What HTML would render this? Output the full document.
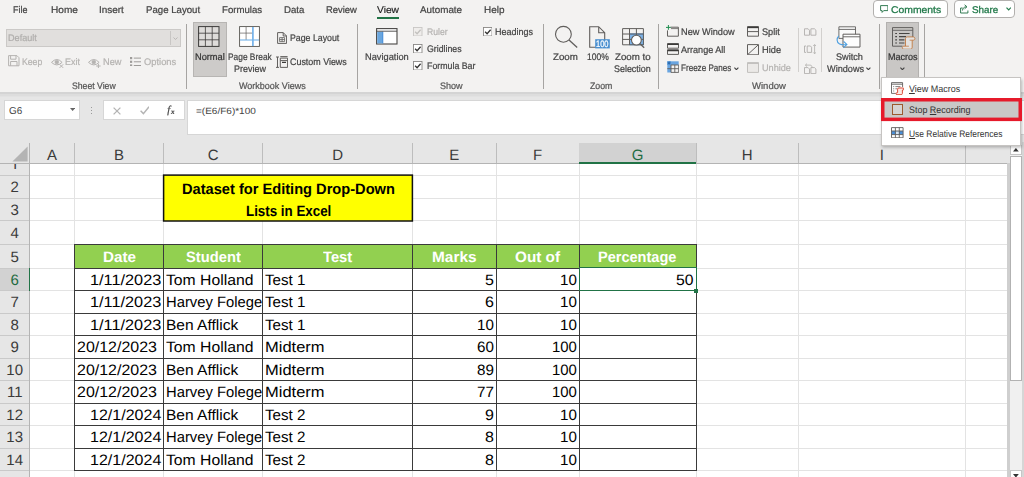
<!DOCTYPE html><html><head><meta charset="utf-8"><title>Excel</title><style>
html,body{margin:0;padding:0;}
body{width:1024px;height:477px;overflow:hidden;position:relative;background:#e6e6e6;font-family:"Liberation Sans", sans-serif;}
.a{position:absolute;box-sizing:border-box;}
.t{position:absolute;white-space:nowrap;line-height:1;transform-origin:0 50%;text-rendering:geometricPrecision;}
u{text-decoration-thickness:0.8px;text-underline-offset:1px;}
</style></head><body>
<div class="a" style="left:0.00px;top:0.00px;width:1024.00px;height:92.00px;background:#f3f2f1;"></div>
<div class="a" style="left:0.00px;top:92.00px;width:1024.00px;height:2.00px;background:#d4d4d4;"></div>
<div class="a" style="left:0.00px;top:94.00px;width:1024.00px;height:2.00px;background:#dddddd;"></div>
<div class="a" style="left:0.00px;top:96.00px;width:1024.00px;height:1.00px;background:#e2e2e2;"></div>
<div class="a" style="left:377.30px;top:17.00px;width:21.60px;height:2.00px;background:#217346;"></div>
<div class="a" style="left:873.40px;top:0.00px;width:74.40px;height:18.00px;background:#fff;border:1px solid #b2b0ae;border-radius:4px;"></div>
<div class="a" style="left:954.40px;top:0.00px;width:60.40px;height:18.00px;background:#fff;border:1px solid #b2b0ae;border-radius:4px;"></div>
<svg class="a" style="left:879.50px;top:5.00px;" width="8.50" height="8.50" viewBox="0 0 8.5 8.5"><path d="M0.6 0.6h7.3v5h-4.2l-1.6 1.8v-1.8h-1.5z" fill="none" stroke="#1e6e42" stroke-width="0.9"/></svg>
<svg class="a" style="left:960.00px;top:4.30px;" width="8.50" height="9.50" viewBox="0 0 8.5 9.5"><path d="M2.6 4h-2v5h7.3v-2.5" fill="none" stroke="#1e6e42" stroke-width="0.9"/><path d="M2.5 6.5c0.2-2.4 1.6-3.6 3.6-3.7M4.6 0.8l2.4 2-2.4 2" fill="none" stroke="#1e6e42" stroke-width="0.9"/></svg>
<svg class="a" style="left:1005.80px;top:7.40px;" width="5.40" height="3.80" viewBox="0 0 5.4 3.8"><path d="M0.5 0.6l2.2 2.3 2.2-2.3" fill="none" stroke="#237a4b" stroke-width="1.2"/></svg>
<div class="a" style="left:186.05px;top:23.50px;width:1.10px;height:65.50px;background:#a6a4a2;"></div>
<div class="a" style="left:356.85px;top:23.50px;width:1.10px;height:65.50px;background:#a6a4a2;"></div>
<div class="a" style="left:542.95px;top:23.50px;width:1.10px;height:65.50px;background:#a6a4a2;"></div>
<div class="a" style="left:658.05px;top:23.50px;width:1.10px;height:65.50px;background:#a6a4a2;"></div>
<div class="a" style="left:878.95px;top:23.50px;width:1.10px;height:65.50px;background:#a6a4a2;"></div>
<div class="a" style="left:923.95px;top:23.50px;width:1.10px;height:65.50px;background:#a6a4a2;"></div>
<div class="a" style="left:797.90px;top:28.00px;width:1.00px;height:44.00px;background:#d2d0ce;"></div>
<div class="a" style="left:821.30px;top:28.00px;width:1.00px;height:44.00px;background:#d2d0ce;"></div>
<div class="a" style="left:6.00px;top:29.10px;width:175.00px;height:17.60px;background:#e1dfdd;border:1px solid #cbc9c7;"></div>
<div class="a" style="left:169.80px;top:30.50px;width:1.00px;height:14.70px;background:#c8c6c4;"></div>
<svg class="a" style="left:173.30px;top:36.50px;" width="5.00" height="3.40" viewBox="0 0 5 3.4"><path d="M0.5 0.5l2 2 2-2" fill="none" stroke="#b5b3b1" stroke-width="0.9"/></svg>
<svg class="a" style="left:8.00px;top:55.40px;" width="11.60" height="11.40" viewBox="0 0 11.6 11.4"><path d="M0.6 0.6h8.3l2.1 2.1v8.1h-10.4z M2.6 0.6v3.6h5.4v-3.6 M2.6 10.8v-4.3h6.4v4.3" fill="none" stroke="#b5b3b1" stroke-width="1"/></svg>
<svg class="a" style="left:50.80px;top:57.60px;" width="13.00" height="10.50" viewBox="0 0 13 10.5"><path d="M0.5 4.4Q5.8 -1.4 11.1 4.4Q5.8 9.4 0.5 4.4z" fill="none" stroke="#b5b3b1" stroke-width="1"/><circle cx="5.8" cy="4.1" r="1.9" fill="#b5b3b1" stroke="#b5b3b1" stroke-width="0.6"/><path d="M8.6 6.3l3.6 3.6M12.2 6.3l-3.6 3.6" stroke="#b5b3b1" stroke-width="1"/></svg>
<svg class="a" style="left:88.20px;top:57.60px;" width="13.00" height="10.50" viewBox="0 0 13 10.5"><path d="M0.5 4.4Q5.8 -1.4 11.1 4.4Q5.8 9.4 0.5 4.4z" fill="none" stroke="#b5b3b1" stroke-width="1"/><circle cx="5.8" cy="4.1" r="1.9" fill="#b5b3b1" stroke="#b5b3b1" stroke-width="0.6"/><path d="M10.4 5.8v4.4M8.2 8h4.4" stroke="#b5b3b1" stroke-width="1"/></svg>
<svg class="a" style="left:129.50px;top:56.80px;" width="11.80" height="9.60" viewBox="0 0 11.8 9.6"><g fill="#9d9b99"><rect x="0" y="0" width="2.2" height="2.2"/><rect x="0" y="3.7" width="2.2" height="2.2"/><rect x="0" y="7.4" width="2.2" height="2.2"/><rect x="3.8" y="0.6" width="8" height="1"/><rect x="3.8" y="4.3" width="8" height="1"/><rect x="3.8" y="8" width="8" height="1"/></g></svg>
<div class="a" style="left:192.50px;top:22.30px;width:34.00px;height:54.40px;background:#cdcbc9;border:1px solid #b7b5b3;"></div>
<svg class="a" style="left:198.30px;top:25.90px;" width="21.60" height="21.00" viewBox="0 0 21.6 21"><rect x="0.6" y="0.6" width="20.4" height="19.8" fill="#dedcda" stroke="#3b3a39" stroke-width="1"/><path d="M7.4 0.6v19.8M14.2 0.6v19.8M0.6 7.2h20.4M0.6 13.8h20.4" stroke="#3b3a39" stroke-width="0.8"/></svg>
<svg class="a" style="left:239.20px;top:25.90px;" width="21.00" height="21.00" viewBox="0 0 21 21"><rect x="0.6" y="0.6" width="19.8" height="19.8" fill="#fff" stroke="#55534f" stroke-width="0.9"/><path d="M7.1 1v13M1 7.1h12.9" stroke="#605e5c" stroke-width="0.7"/><path d="M13.9 1v19" stroke="#74b2ea" stroke-width="1.7"/><path d="M1 14h19" stroke="#74b2ea" stroke-width="1.1"/></svg>
<svg class="a" style="left:277.00px;top:31.50px;" width="10.20" height="12.00" viewBox="0 0 10.2 12"><path d="M0.6 0.6h5.6l3.4 3.4v7.4h-9z M6.2 0.6v3.4h3.4" fill="none" stroke="#605e5c" stroke-width="1"/><path d="M2.6 5.6h5v4h-5z M2.6 7.6h5 M5.1 5.6v4" fill="none" stroke="#605e5c" stroke-width="0.8"/></svg>
<svg class="a" style="left:276.00px;top:55.80px;" width="12.20" height="12.40" viewBox="0 0 12.2 12.4"><path d="M0 1h3M1.5 1v10.4M0 11.4h3" stroke="#605e5c" stroke-width="1"/><path d="M4.3 2.1h7.3v9.3h-7.3z M4.3 4.6h7.3" fill="none" stroke="#605e5c" stroke-width="1"/><path d="M4.3 0.6h7.3" stroke="#605e5c" stroke-width="1"/><path d="M6 6.4h4" stroke="#3b3a39" stroke-width="1.2"/></svg>
<svg class="a" style="left:376.00px;top:28.30px;" width="21.60" height="16.60" viewBox="0 0 21.6 16.6"><rect x="0.6" y="0.6" width="20.4" height="15.4" fill="#fff" stroke="#484644" stroke-width="1.1"/><rect x="1.2" y="3.6" width="5.6" height="11.8" fill="#6aa6de"/><path d="M6.8 3.6v11.8" stroke="#2b7cd3" stroke-width="0.8"/><path d="M0.6 3.2h20.4" stroke="#484644" stroke-width="0.9"/></svg>
<svg class="a" style="left:413.30px;top:26.50px;" width="9.50" height="9.50" viewBox="0 0 9.5 9.5"><rect x="0.5" y="0.5" width="8.5" height="8.5" fill="#efedeb" stroke="#c8c6c4" stroke-width="0.9"/><path d="M2.1 4.7l2 2 3.5-3.9" fill="none" stroke="#c2c0be" stroke-width="1.3"/></svg>
<svg class="a" style="left:413.30px;top:43.60px;" width="9.50" height="9.50" viewBox="0 0 9.5 9.5"><rect x="0.5" y="0.5" width="8.5" height="8.5" fill="#fff" stroke="#8a8886" stroke-width="0.9"/><path d="M2.1 4.7l2 2 3.5-3.9" fill="none" stroke="#323130" stroke-width="1.3"/></svg>
<svg class="a" style="left:413.30px;top:60.90px;" width="9.50" height="9.50" viewBox="0 0 9.5 9.5"><rect x="0.5" y="0.5" width="8.5" height="8.5" fill="#fff" stroke="#8a8886" stroke-width="0.9"/><path d="M2.1 4.7l2 2 3.5-3.9" fill="none" stroke="#323130" stroke-width="1.3"/></svg>
<svg class="a" style="left:482.50px;top:26.50px;" width="9.50" height="9.50" viewBox="0 0 9.5 9.5"><rect x="0.5" y="0.5" width="8.5" height="8.5" fill="#fff" stroke="#8a8886" stroke-width="0.9"/><path d="M2.1 4.7l2 2 3.5-3.9" fill="none" stroke="#323130" stroke-width="1.3"/></svg>
<svg class="a" style="left:554.00px;top:25.30px;" width="25.00" height="24.00" viewBox="0 0 25 24"><circle cx="9.4" cy="9.3" r="7.9" fill="none" stroke="#605e5c" stroke-width="1.1"/><path d="M15 14.9l8.2 7.6" stroke="#605e5c" stroke-width="1.3"/></svg>
<svg class="a" style="left:589.00px;top:26.00px;" width="21.50" height="23.00" viewBox="0 0 21.5 23"><path d="M0.7 0.7h9l6 6v14.5h-15z M9.7 0.7v6h6" fill="none" stroke="#605e5c" stroke-width="1.1"/><rect x="6.2" y="13.2" width="14.6" height="9.2" fill="#4a8fd0"/></svg>
<svg class="a" style="left:622.00px;top:28.00px;" width="22.50" height="20.50" viewBox="0 0 22.5 20.5"><rect x="7.6" y="5.9" width="14" height="10.9" fill="#7db3e8" stroke="#3d86d2" stroke-width="0.8"/><path d="M0.6 0.6h20.8v16.2h-20.8z M0.6 6h20.8 M0.6 11.4h20.8 M7.5 0.6v16.2 M14.4 0.6v16.2" fill="none" stroke="#605e5c" stroke-width="1"/><circle cx="14.4" cy="12.1" r="4.9" fill="#fff" stroke="#605e5c" stroke-width="1.1"/><path d="M18 15.7l4.2 4.1" stroke="#605e5c" stroke-width="1.3"/></svg>
<svg class="a" style="left:666.00px;top:25.00px;" width="13.20" height="11.80" viewBox="0 0 13.2 11.8"><path d="M4.6 2.2h7.8v9h-10.9v-5.8" fill="none" stroke="#605e5c" stroke-width="1"/><path d="M5 3.6h7" stroke="#605e5c" stroke-width="0.8"/><path d="M2.4 0v4.8M0 2.4h4.8" stroke="#1e8c4e" stroke-width="1"/></svg>
<svg class="a" style="left:667.00px;top:43.40px;" width="12.00" height="12.00" viewBox="0 0 12 12"><path d="M0.5 0.6h11v4.6h-11z M0.5 6.8h11v4.6h-11z" fill="none" stroke="#605e5c" stroke-width="1"/><path d="M0.5 1.3h11 M0.5 7.5h11" stroke="#3b3a39" stroke-width="1.6"/></svg>
<svg class="a" style="left:667.00px;top:61.20px;" width="12.00" height="11.80" viewBox="0 0 12 11.8"><rect x="0.3" y="0.3" width="11.4" height="3.6" fill="#69a5e0"/><rect x="0.3" y="0.3" width="3.7" height="11.2" fill="#69a5e0"/><path d="M4 4h7.7v7.4h-7.7z M7.8 4v7.4 M4 7.7h7.7 M0.3 7.7h3.7" fill="none" stroke="#605e5c" stroke-width="0.9"/><path d="M2.1 0.3v3.6M0.5 1.2l3.2 1.8M3.7 1.2l-3.2 1.8" stroke="#1b5fa8" stroke-width="0.7"/></svg>
<svg class="a" style="left:734.30px;top:66.60px;" width="4.80" height="3.60" viewBox="0 0 4.8 3.6"><path d="M0.4 0.6l2 2.1 2-2.1" fill="none" stroke="#444444" stroke-width="1.1"/></svg>
<svg class="a" style="left:747.20px;top:26.20px;" width="12.00" height="10.80" viewBox="0 0 12 10.8"><path d="M0.5 0.6h11v9.6h-11z M0.5 5.6h11" fill="none" stroke="#605e5c" stroke-width="1"/><path d="M0.5 1.4h11" stroke="#3b3a39" stroke-width="1.5"/></svg>
<svg class="a" style="left:747.20px;top:43.60px;" width="12.00" height="11.40" viewBox="0 0 12 11.4"><path d="M0.5 0.6h11v10.2h-11z M0.8 10.5l10.4-9.6" fill="none" stroke="#605e5c" stroke-width="1"/></svg>
<svg class="a" style="left:747.20px;top:62.00px;" width="12.00" height="11.00" viewBox="0 0 12 11"><path d="M0.5 0.6h11v9.8h-11z" fill="#ebe9e7" stroke="#c2c0be" stroke-width="1"/><path d="M0.5 1.3h11" stroke="#c2c0be" stroke-width="1.4"/></svg>
<svg class="a" style="left:804.40px;top:27.50px;" width="12.40" height="8.00" viewBox="0 0 12.4 8"><path d="M0.5 0.8h3.6l1.4 1.4v5h-5z M6.9 0.8h3.6l1.4 1.4v5h-5z" fill="none" stroke="#b0aeac" stroke-width="0.9"/></svg>
<svg class="a" style="left:804.40px;top:43.80px;" width="12.40" height="10.40" viewBox="0 0 12.4 10.4"><path d="M0.5 2h1.5M0.5 2v6.4M0.5 8.4h1.5 M3.2 2h3.2l1.2 1.2v5.2h-4.4z" fill="none" stroke="#b0aeac" stroke-width="0.9"/><path d="M10.6 0.6v9.2M9.2 2l1.4-1.4 1.4 1.4M9.2 8.4l1.4 1.4 1.4-1.4" fill="none" stroke="#b0aeac" stroke-width="0.8"/></svg>
<svg class="a" style="left:804.40px;top:62.60px;" width="12.40" height="11.00" viewBox="0 0 12.4 11"><path d="M0.5 4.6h3.6l1.4 1.4v4.6h-5z M6.9 4.6h3.6l1.4 1.4v4.6h-5z" fill="none" stroke="#b0aeac" stroke-width="0.9"/><path d="M3 0.6l-1.6 1.5 1.6 1.5 M1.4 2.1h4.6c1.6 0 2 1 2 2.4" fill="none" stroke="#b0aeac" stroke-width="0.8"/></svg>
<svg class="a" style="left:836.00px;top:25.60px;" width="25.50" height="22.40" viewBox="0 0 25.5 22.4"><path d="M2.9 0.8h16.6v11.6h-16.6z" fill="#fafafa" stroke="#605e5c" stroke-width="0.9"/><path d="M2.9 3.4h16.6" stroke="#605e5c" stroke-width="0.9"/><path d="M7 8.2h17v12.9h-17z" fill="#fdfdfd" stroke="#605e5c" stroke-width="1"/><path d="M7 10.8h17" stroke="#605e5c" stroke-width="0.9"/><path d="M2.8 9.8C0.6 12 0.2 16.4 3.6 18C5.4 18.8 8 18.9 10.4 18.7M7.6 15.4L10.9 18.6L7.4 21.6" fill="none" stroke="#4d9fe0" stroke-width="1.1"/></svg>
<svg class="a" style="left:866.40px;top:66.60px;" width="4.80" height="3.60" viewBox="0 0 4.8 3.6"><path d="M0.4 0.6l2 2.1 2-2.1" fill="none" stroke="#444444" stroke-width="1.1"/></svg>
<div class="a" style="left:886.20px;top:22.00px;width:32.40px;height:56.00px;background:#c9c7c5;border:1px solid #b3b1af;"></div>
<svg class="a" style="left:892.00px;top:26.60px;" width="24.00" height="22.80" viewBox="0 0 24 22.8"><path d="M20.8 10V0.6H0.5V19.2H10.5" fill="none" stroke="#605e5c" stroke-width="1"/><path d="M0.5 3.3h20.3" stroke="#605e5c" stroke-width="0.9"/><path d="M3.2 6.5h1.8M3.2 9.6h1.8M3.2 12.9h1.8M3.2 16h1.8M7 6.5h10.6M7 9.6h7M7 12.9h5.4M7 16h5.4" stroke="#484644" stroke-width="1.1"/><path d="M13.5 19.2V11.6C13.5 10.4 14.4 9.9 15.4 9.9H21.2C22.4 9.9 22.9 10.8 22.9 11.6C22.9 12.6 22.2 13.2 21.2 13.2H20.2V20.2C20.2 21.6 19.2 22.2 18.2 22.2H12C10.8 22.2 10.3 21.4 10.3 20.7C10.3 19.8 11 19.2 12 19.2Z" fill="#e4e2e0" stroke="#c27a42" stroke-width="0.9"/><path d="M20.2 13.2h-2.6M13.5 19.2h3.4" stroke="#c27a42" stroke-width="0.8" fill="none"/></svg>
<svg class="a" style="left:899.80px;top:66.80px;" width="4.80" height="3.60" viewBox="0 0 4.8 3.6"><path d="M0.4 0.6l2 2.1 2-2.1" fill="none" stroke="#444444" stroke-width="1.1"/></svg>
<div class="a" style="left:4.00px;top:100.00px;width:76.00px;height:20.00px;background:#fff;border:1px solid #d6d6d6;"></div>
<span class="t" style="left:8.60px;top:107px;font-size:10px;color:#444444;transform:scaleX(0.9892);">G6</span>
<svg class="a" style="left:69.60px;top:108.20px;" width="5.20" height="3.00" viewBox="0 0 5.2 3"><path d="M0 0h5.2l-2.6 3z" fill="#666"/></svg>
<div class="a" style="left:91.00px;top:106.60px;width:1.00px;height:1.00px;background:#9a9a9a;"></div>
<div class="a" style="left:91.00px;top:109.80px;width:1.00px;height:1.00px;background:#9a9a9a;"></div>
<div class="a" style="left:91.00px;top:113.00px;width:1.00px;height:1.00px;background:#9a9a9a;"></div>
<div class="a" style="left:103.00px;top:100.00px;width:82.00px;height:20.00px;background:#fff;border:1px solid #d6d6d6;"></div>
<svg class="a" style="left:113.00px;top:106.60px;" width="8.00" height="8.00" viewBox="0 0 8 8"><path d="M0.6 0.6l6.8 6.8M7.4 0.6l-6.8 6.8" stroke="#b4b4b4" stroke-width="1.3"/></svg>
<svg class="a" style="left:139.60px;top:106.20px;" width="9.60" height="8.40" viewBox="0 0 9.6 8.4"><path d="M0.6 4.8l2.8 2.8 5.6-6.8" fill="none" stroke="#b4b4b4" stroke-width="1.4"/></svg>
<div class="a" style="left:187.00px;top:100.00px;width:840.00px;height:35.00px;background:#fff;border:1px solid #d6d6d6;"></div>
<span class="t" style="left:196.44px;top:107px;font-size:9.1px;color:#444444;transform:scaleX(1.1006);">=(E6/F6)*100</span>
<div class="a" style="left:29.60px;top:163.30px;width:977.40px;height:320.00px;background:#fff;"></div>
<div class="a" style="left:74.00px;top:163.30px;width:1.00px;height:313.70px;background:#e3e3e3;"></div>
<div class="a" style="left:163.10px;top:163.30px;width:1.00px;height:313.70px;background:#e3e3e3;"></div>
<div class="a" style="left:262.20px;top:163.30px;width:1.00px;height:313.70px;background:#e3e3e3;"></div>
<div class="a" style="left:412.10px;top:163.30px;width:1.00px;height:313.70px;background:#e3e3e3;"></div>
<div class="a" style="left:495.50px;top:163.30px;width:1.00px;height:313.70px;background:#e3e3e3;"></div>
<div class="a" style="left:578.70px;top:163.30px;width:1.00px;height:313.70px;background:#e3e3e3;"></div>
<div class="a" style="left:695.50px;top:163.30px;width:1.00px;height:313.70px;background:#e3e3e3;"></div>
<div class="a" style="left:797.70px;top:163.30px;width:1.00px;height:313.70px;background:#e3e3e3;"></div>
<div class="a" style="left:964.90px;top:163.30px;width:1.00px;height:313.70px;background:#e3e3e3;"></div>
<div class="a" style="left:29.60px;top:174.70px;width:977.40px;height:1.00px;background:#e3e3e3;"></div>
<div class="a" style="left:29.60px;top:197.50px;width:977.40px;height:1.00px;background:#e3e3e3;"></div>
<div class="a" style="left:29.60px;top:220.40px;width:977.40px;height:1.00px;background:#e3e3e3;"></div>
<div class="a" style="left:29.60px;top:243.70px;width:977.40px;height:1.00px;background:#e3e3e3;"></div>
<div class="a" style="left:29.60px;top:267.50px;width:977.40px;height:1.00px;background:#e3e3e3;"></div>
<div class="a" style="left:29.60px;top:290.10px;width:977.40px;height:1.00px;background:#e3e3e3;"></div>
<div class="a" style="left:29.60px;top:312.60px;width:977.40px;height:1.00px;background:#e3e3e3;"></div>
<div class="a" style="left:29.60px;top:335.00px;width:977.40px;height:1.00px;background:#e3e3e3;"></div>
<div class="a" style="left:29.60px;top:357.70px;width:977.40px;height:1.00px;background:#e3e3e3;"></div>
<div class="a" style="left:29.60px;top:380.10px;width:977.40px;height:1.00px;background:#e3e3e3;"></div>
<div class="a" style="left:29.60px;top:402.70px;width:977.40px;height:1.00px;background:#e3e3e3;"></div>
<div class="a" style="left:29.60px;top:425.20px;width:977.40px;height:1.00px;background:#e3e3e3;"></div>
<div class="a" style="left:29.60px;top:447.70px;width:977.40px;height:1.00px;background:#e3e3e3;"></div>
<div class="a" style="left:29.60px;top:470.30px;width:977.40px;height:1.00px;background:#e3e3e3;"></div>
<div class="a" style="left:74.00px;top:143.00px;width:1.00px;height:20.30px;background:#bdbdbd;"></div>
<div class="a" style="left:163.10px;top:143.00px;width:1.00px;height:20.30px;background:#bdbdbd;"></div>
<div class="a" style="left:262.20px;top:143.00px;width:1.00px;height:20.30px;background:#bdbdbd;"></div>
<div class="a" style="left:412.10px;top:143.00px;width:1.00px;height:20.30px;background:#bdbdbd;"></div>
<div class="a" style="left:495.50px;top:143.00px;width:1.00px;height:20.30px;background:#bdbdbd;"></div>
<div class="a" style="left:578.70px;top:143.00px;width:1.00px;height:20.30px;background:#bdbdbd;"></div>
<div class="a" style="left:695.50px;top:143.00px;width:1.00px;height:20.30px;background:#bdbdbd;"></div>
<div class="a" style="left:797.70px;top:143.00px;width:1.00px;height:20.30px;background:#bdbdbd;"></div>
<div class="a" style="left:964.90px;top:143.00px;width:1.00px;height:20.30px;background:#bdbdbd;"></div>
<div class="a" style="left:579.20px;top:142.50px;width:116.80px;height:20.80px;background:#d2d2d2;"></div>
<div class="a" style="left:0.00px;top:162.80px;width:1007.00px;height:1.00px;background:#b4b4b4;"></div>
<div class="a" style="left:579.20px;top:162.00px;width:116.80px;height:1.60px;background:#217346;"></div>
<span class="t" style="left:47.04px;top:148px;font-size:15px;color:#3a3a3a;">A</span>
<span class="t" style="left:114.04px;top:148px;font-size:15px;color:#3a3a3a;">B</span>
<span class="t" style="left:207.73px;top:148px;font-size:15px;color:#3a3a3a;">C</span>
<span class="t" style="left:332.23px;top:148px;font-size:15px;color:#3a3a3a;">D</span>
<span class="t" style="left:449.29px;top:148px;font-size:15px;color:#3a3a3a;">E</span>
<span class="t" style="left:533.01px;top:148px;font-size:15px;color:#3a3a3a;">F</span>
<span class="t" style="left:631.76px;top:148px;font-size:15px;color:#1f6b41;">G</span>
<span class="t" style="left:741.68px;top:148px;font-size:15px;color:#3a3a3a;">H</span>
<span class="t" style="left:879.71px;top:148px;font-size:15px;color:#3a3a3a;">I</span>
<svg class="a" style="left:11.60px;top:145.60px;" width="16.00" height="16.00" viewBox="0 0 16 16"><path d="M15.6 0.4v15.2h-15.2z" fill="#b4b4b4"/></svg>
<div class="a" style="left:0.00px;top:268.00px;width:29.60px;height:22.60px;background:#d2d2d2;"></div>
<div class="a" style="left:0.00px;top:174.70px;width:29.60px;height:1.00px;background:#c9c9c9;"></div>
<div class="a" style="left:0.00px;top:197.50px;width:29.60px;height:1.00px;background:#c9c9c9;"></div>
<div class="a" style="left:0.00px;top:220.40px;width:29.60px;height:1.00px;background:#c9c9c9;"></div>
<div class="a" style="left:0.00px;top:243.70px;width:29.60px;height:1.00px;background:#c9c9c9;"></div>
<div class="a" style="left:0.00px;top:267.50px;width:29.60px;height:1.00px;background:#c9c9c9;"></div>
<div class="a" style="left:0.00px;top:290.10px;width:29.60px;height:1.00px;background:#c9c9c9;"></div>
<div class="a" style="left:0.00px;top:312.60px;width:29.60px;height:1.00px;background:#c9c9c9;"></div>
<div class="a" style="left:0.00px;top:335.00px;width:29.60px;height:1.00px;background:#c9c9c9;"></div>
<div class="a" style="left:0.00px;top:357.70px;width:29.60px;height:1.00px;background:#c9c9c9;"></div>
<div class="a" style="left:0.00px;top:380.10px;width:29.60px;height:1.00px;background:#c9c9c9;"></div>
<div class="a" style="left:0.00px;top:402.70px;width:29.60px;height:1.00px;background:#c9c9c9;"></div>
<div class="a" style="left:0.00px;top:425.20px;width:29.60px;height:1.00px;background:#c9c9c9;"></div>
<div class="a" style="left:0.00px;top:447.70px;width:29.60px;height:1.00px;background:#c9c9c9;"></div>
<div class="a" style="left:0.00px;top:470.30px;width:29.60px;height:1.00px;background:#c9c9c9;"></div>
<div class="a" style="left:29.10px;top:143.00px;width:1.00px;height:334.00px;background:#b4b4b4;"></div>
<div class="a" style="left:28.60px;top:268.00px;width:1.60px;height:22.60px;background:#217346;"></div>
<span class="t" style="left:10.53px;top:180px;font-size:15px;color:#3a3a3a;">2</span>
<span class="t" style="left:10.53px;top:203px;font-size:15px;color:#3a3a3a;">3</span>
<span class="t" style="left:10.53px;top:226px;font-size:15px;color:#3a3a3a;">4</span>
<span class="t" style="left:10.53px;top:250px;font-size:15px;color:#3a3a3a;">5</span>
<span class="t" style="left:10.53px;top:273px;font-size:15px;color:#1f6b41;">6</span>
<span class="t" style="left:10.53px;top:295px;font-size:15px;color:#3a3a3a;">7</span>
<span class="t" style="left:10.53px;top:318px;font-size:15px;color:#3a3a3a;">8</span>
<span class="t" style="left:10.53px;top:340px;font-size:15px;color:#3a3a3a;">9</span>
<span class="t" style="left:6.36px;top:363px;font-size:15px;color:#3a3a3a;">10</span>
<span class="t" style="left:6.91px;top:385px;font-size:15px;color:#3a3a3a;">11</span>
<span class="t" style="left:6.36px;top:408px;font-size:15px;color:#3a3a3a;">12</span>
<span class="t" style="left:6.36px;top:430px;font-size:15px;color:#3a3a3a;">13</span>
<span class="t" style="left:6.36px;top:453px;font-size:15px;color:#3a3a3a;">14</span>
<div class="a" style="left:0;top:164px;width:29px;height:5px;overflow:hidden;"><span class="t" style="left:10.8px;top:-5px;font-size:15px;color:#3a3a3a;">1</span></div>
<svg class="a" style="left:161.00px;top:173.00px;" width="254.00" height="50.00" viewBox="0 0 254 50"><rect x="2.6" y="2.1" width="248.8" height="45.9" fill="#ffff00" stroke="#111" stroke-width="1.5"/></svg>
<span class="t" style="left:181.55px;top:182px;font-size:15px;color:#000;font-weight:700;transform:scaleX(0.9751);">Dataset for Editing Drop-Down</span>
<span class="t" style="left:245.75px;top:204px;font-size:15px;color:#000;font-weight:700;transform:scaleX(0.8897);">Lists in Excel</span>
<div class="a" style="left:74.50px;top:244.20px;width:621.50px;height:23.80px;background:#92d050;"></div>
<span class="t" style="left:102.70px;top:250px;font-size:15px;color:#fff;font-weight:700;transform:scaleX(1.0149);">Date</span>
<span class="t" style="left:185.60px;top:250px;font-size:15px;color:#fff;font-weight:700;transform:scaleX(0.9816);">Student</span>
<span class="t" style="left:322.90px;top:250px;font-size:15px;color:#fff;font-weight:700;transform:scaleX(0.9820);">Test</span>
<span class="t" style="left:431.95px;top:250px;font-size:15px;color:#fff;font-weight:700;transform:scaleX(1.0263);">Marks</span>
<span class="t" style="left:515.20px;top:250px;font-size:15px;color:#fff;font-weight:700;transform:scaleX(1.0191);">Out of</span>
<span class="t" style="left:598.40px;top:250px;font-size:15px;color:#fff;font-weight:700;transform:scaleX(0.9694);">Percentage</span>
<div class="a" style="left:74.00px;top:243.70px;width:622.50px;height:1.00px;background:#3a3a3a;"></div>
<div class="a" style="left:74.00px;top:267.50px;width:622.50px;height:1.00px;background:#3a3a3a;"></div>
<div class="a" style="left:74.00px;top:290.10px;width:622.50px;height:1.00px;background:#3a3a3a;"></div>
<div class="a" style="left:74.00px;top:312.60px;width:622.50px;height:1.00px;background:#3a3a3a;"></div>
<div class="a" style="left:74.00px;top:335.00px;width:622.50px;height:1.00px;background:#3a3a3a;"></div>
<div class="a" style="left:74.00px;top:357.70px;width:622.50px;height:1.00px;background:#3a3a3a;"></div>
<div class="a" style="left:74.00px;top:380.10px;width:622.50px;height:1.00px;background:#3a3a3a;"></div>
<div class="a" style="left:74.00px;top:402.70px;width:622.50px;height:1.00px;background:#3a3a3a;"></div>
<div class="a" style="left:74.00px;top:425.20px;width:622.50px;height:1.00px;background:#3a3a3a;"></div>
<div class="a" style="left:74.00px;top:447.70px;width:622.50px;height:1.00px;background:#3a3a3a;"></div>
<div class="a" style="left:74.00px;top:470.30px;width:622.50px;height:1.00px;background:#3a3a3a;"></div>
<div class="a" style="left:74.00px;top:244.20px;width:1.00px;height:226.60px;background:#3a3a3a;"></div>
<div class="a" style="left:163.10px;top:244.20px;width:1.00px;height:226.60px;background:#3a3a3a;"></div>
<div class="a" style="left:262.20px;top:244.20px;width:1.00px;height:226.60px;background:#3a3a3a;"></div>
<div class="a" style="left:412.10px;top:244.20px;width:1.00px;height:226.60px;background:#3a3a3a;"></div>
<div class="a" style="left:495.50px;top:244.20px;width:1.00px;height:226.60px;background:#3a3a3a;"></div>
<div class="a" style="left:578.70px;top:244.20px;width:1.00px;height:226.60px;background:#3a3a3a;"></div>
<div class="a" style="left:695.50px;top:244.20px;width:1.00px;height:226.60px;background:#3a3a3a;"></div>
<span class="t" style="left:90.25px;top:273px;font-size:15px;color:#000;transform:scaleX(1.0865);">1/11/2023</span>
<div class="a" style="left:164.2px;top:269px;width:98px;height:21px;overflow:hidden;">
<span class="t" style="left:1.95px;top:4px;font-size:15px;color:#000;transform:scaleX(1.0483);">Tom Holland</span>
</div>
<span class="t" style="left:265.25px;top:273px;font-size:15px;color:#000;transform:scaleX(1.0117);">Test 1</span>
<span class="t" style="left:485.05px;top:273px;font-size:15px;color:#000;transform:scaleX(1.0667);">5</span>
<span class="t" style="left:559.65px;top:273px;font-size:15px;color:#000;transform:scaleX(1.0127);">10</span>
<span class="t" style="left:90.25px;top:295px;font-size:15px;color:#000;transform:scaleX(1.0865);">1/11/2023</span>
<div class="a" style="left:164.2px;top:291px;width:98px;height:21px;overflow:hidden;">
<span class="t" style="left:1.95px;top:4px;font-size:15px;color:#000;transform:scaleX(0.9852);">Harvey Folege</span>
</div>
<span class="t" style="left:265.25px;top:295px;font-size:15px;color:#000;transform:scaleX(1.0117);">Test 1</span>
<span class="t" style="left:485.05px;top:295px;font-size:15px;color:#000;transform:scaleX(1.0667);">6</span>
<span class="t" style="left:559.65px;top:295px;font-size:15px;color:#000;transform:scaleX(1.0127);">10</span>
<span class="t" style="left:90.25px;top:318px;font-size:15px;color:#000;transform:scaleX(1.0865);">1/11/2023</span>
<div class="a" style="left:164.2px;top:314px;width:98px;height:21px;overflow:hidden;">
<span class="t" style="left:1.95px;top:4px;font-size:15px;color:#000;transform:scaleX(1.0363);">Ben Afflick</span>
</div>
<span class="t" style="left:265.25px;top:318px;font-size:15px;color:#000;transform:scaleX(1.0117);">Test 1</span>
<span class="t" style="left:477.05px;top:318px;font-size:15px;color:#000;transform:scaleX(1.0127);">10</span>
<span class="t" style="left:559.65px;top:318px;font-size:15px;color:#000;transform:scaleX(1.0127);">10</span>
<span class="t" style="left:76.75px;top:340px;font-size:15px;color:#000;transform:scaleX(1.0656);">20/12/2023</span>
<div class="a" style="left:164.2px;top:336px;width:98px;height:21px;overflow:hidden;">
<span class="t" style="left:1.95px;top:4px;font-size:15px;color:#000;transform:scaleX(1.0483);">Tom Holland</span>
</div>
<span class="t" style="left:265.25px;top:340px;font-size:15px;color:#000;transform:scaleX(1.0984);">Midterm</span>
<span class="t" style="left:477.05px;top:340px;font-size:15px;color:#000;transform:scaleX(1.0127);">60</span>
<span class="t" style="left:551.65px;top:340px;font-size:15px;color:#000;transform:scaleX(0.9948);">100</span>
<span class="t" style="left:76.75px;top:363px;font-size:15px;color:#000;transform:scaleX(1.0656);">20/12/2023</span>
<div class="a" style="left:164.2px;top:359px;width:98px;height:21px;overflow:hidden;">
<span class="t" style="left:1.95px;top:4px;font-size:15px;color:#000;transform:scaleX(1.0363);">Ben Afflick</span>
</div>
<span class="t" style="left:265.25px;top:363px;font-size:15px;color:#000;transform:scaleX(1.0984);">Midterm</span>
<span class="t" style="left:477.05px;top:363px;font-size:15px;color:#000;transform:scaleX(1.0127);">89</span>
<span class="t" style="left:551.65px;top:363px;font-size:15px;color:#000;transform:scaleX(0.9948);">100</span>
<span class="t" style="left:76.75px;top:385px;font-size:15px;color:#000;transform:scaleX(1.0656);">20/12/2023</span>
<div class="a" style="left:164.2px;top:381px;width:98px;height:21px;overflow:hidden;">
<span class="t" style="left:1.95px;top:4px;font-size:15px;color:#000;transform:scaleX(0.9852);">Harvey Folege</span>
</div>
<span class="t" style="left:265.25px;top:385px;font-size:15px;color:#000;transform:scaleX(1.0984);">Midterm</span>
<span class="t" style="left:477.05px;top:385px;font-size:15px;color:#000;transform:scaleX(1.0127);">77</span>
<span class="t" style="left:551.65px;top:385px;font-size:15px;color:#000;transform:scaleX(0.9948);">100</span>
<span class="t" style="left:90.25px;top:408px;font-size:15px;color:#000;transform:scaleX(1.0684);">12/1/2024</span>
<div class="a" style="left:164.2px;top:404px;width:98px;height:21px;overflow:hidden;">
<span class="t" style="left:1.95px;top:4px;font-size:15px;color:#000;transform:scaleX(1.0363);">Ben Afflick</span>
</div>
<span class="t" style="left:265.25px;top:408px;font-size:15px;color:#000;transform:scaleX(1.0117);">Test 2</span>
<span class="t" style="left:485.05px;top:408px;font-size:15px;color:#000;transform:scaleX(1.0667);">9</span>
<span class="t" style="left:559.65px;top:408px;font-size:15px;color:#000;transform:scaleX(1.0127);">10</span>
<span class="t" style="left:90.25px;top:430px;font-size:15px;color:#000;transform:scaleX(1.0684);">12/1/2024</span>
<div class="a" style="left:164.2px;top:426px;width:98px;height:21px;overflow:hidden;">
<span class="t" style="left:1.95px;top:4px;font-size:15px;color:#000;transform:scaleX(0.9852);">Harvey Folege</span>
</div>
<span class="t" style="left:265.25px;top:430px;font-size:15px;color:#000;transform:scaleX(1.0117);">Test 2</span>
<span class="t" style="left:485.05px;top:430px;font-size:15px;color:#000;transform:scaleX(1.0667);">8</span>
<span class="t" style="left:559.65px;top:430px;font-size:15px;color:#000;transform:scaleX(1.0127);">10</span>
<span class="t" style="left:90.25px;top:453px;font-size:15px;color:#000;transform:scaleX(1.0684);">12/1/2024</span>
<div class="a" style="left:164.2px;top:449px;width:98px;height:21px;overflow:hidden;">
<span class="t" style="left:1.95px;top:4px;font-size:15px;color:#000;transform:scaleX(1.0483);">Tom Holland</span>
</div>
<span class="t" style="left:265.25px;top:453px;font-size:15px;color:#000;transform:scaleX(1.0117);">Test 2</span>
<span class="t" style="left:485.05px;top:453px;font-size:15px;color:#000;transform:scaleX(1.0667);">8</span>
<span class="t" style="left:559.65px;top:453px;font-size:15px;color:#000;transform:scaleX(1.0127);">10</span>
<span class="t" style="left:676.45px;top:273px;font-size:15px;color:#000;transform:scaleX(1.0487);">50</span>
<div class="a" style="left:580.00px;top:268.00px;width:116.00px;height:1.00px;background:#fff;"></div>
<div class="a" style="left:578.60px;top:267.30px;width:118.20px;height:24.00px;border:1.5px solid #217346;"></div>
<div class="a" style="left:694.00px;top:289.00px;width:4.00px;height:4.00px;background:#217346;"></div>
<div class="a" style="left:1007.00px;top:142.00px;width:17.00px;height:335.00px;background:#e6e6e6;"></div>
<div class="a" style="left:1007.00px;top:163.00px;width:3.00px;height:314.00px;background:#cfcfcf;"></div>
<div class="a" style="left:1010.00px;top:145.00px;width:12.00px;height:332.00px;background:#f0f0f0;"></div>
<div class="a" style="left:1010.00px;top:145.00px;width:12.00px;height:10.00px;background:#fff;border:1px solid #c6c6c6;"></div>
<svg class="a" style="left:1013.10px;top:148.00px;" width="5.80" height="3.60" viewBox="0 0 5.8 3.6"><path d="M0 3.6h5.8l-2.9-3.6z" fill="#333"/></svg>
<div class="a" style="left:1010.00px;top:156.00px;width:12.00px;height:225.00px;background:#fff;border:1px solid #b2b2b2;"></div>
<div class="a" style="left:1010.00px;top:470.00px;width:12.00px;height:10.00px;background:#fff;border:1px solid #c6c6c6;"></div>
<svg class="a" style="left:1013.10px;top:473.60px;" width="5.80" height="3.60" viewBox="0 0 5.8 3.6"><path d="M0 0h5.8l-2.9 3.6z" fill="#333"/></svg>
<div class="a" style="left:1022.00px;top:142.00px;width:2.00px;height:335.00px;background:#d6d6d6;"></div>
<div class="a" style="left:881.40px;top:77.30px;width:139.40px;height:68.70px;background:#fff;border:1px solid #c6c4c2;box-shadow:1px 1.5px 3px rgba(0,0,0,0.25);"></div>
<svg class="a" style="left:880.00px;top:97.00px;" width="144.00" height="26.00" viewBox="0 0 144 26"><rect x="2.75" y="2.75" width="137.5" height="19.6" fill="#c9c8c7" stroke="#e61a2b" stroke-width="3.5"/></svg>
<span class="t" style="left:909.32px;top:85px;font-size:9.5px;color:#333;transform:scaleX(0.9434);"><u>V</u>iew Macros</span>
<span class="t" style="left:909.32px;top:106px;font-size:9.5px;color:#333;transform:scaleX(0.9395);">Stop <u>R</u>ecording</span>
<span class="t" style="left:909.32px;top:130px;font-size:9.5px;color:#333;transform:scaleX(0.8883);"><u>U</u>se Relative References</span>
<svg class="a" style="left:890.80px;top:81.60px;" width="13.40" height="13.20" viewBox="0 0 13.4 13.2"><path d="M11.6 5V0.6H0.5V11.4H4.8" fill="none" stroke="#605e5c" stroke-width="0.9"/><path d="M0.5 2.2h11.1" stroke="#605e5c" stroke-width="0.9"/><path d="M2.2 4.6h1M2.2 6.8h1M2.2 9h1M4.4 4.6h5M4.4 6.8h2" stroke="#605e5c" stroke-width="0.8"/><path d="M6.6 10.6V7.2C6.6 6.4 7.1 6 7.8 6H12C12.8 6 13 6.6 13 7C13 7.6 12.6 8 12 8H11.4V11.4C11.4 12.3 10.8 12.7 10.2 12.7H6C5.3 12.7 5 12.2 5 11.7C5 11.1 5.4 10.6 6 10.6Z" fill="#fbe9e4" stroke="#d63a26" stroke-width="0.9"/></svg>
<div class="a" style="left:892.00px;top:103.80px;width:10.60px;height:10.80px;background:#d6d4d2;border:1px solid #9c5a2e;"></div>
<svg class="a" style="left:891.20px;top:126.80px;" width="12.60" height="11.40" viewBox="0 0 12.6 11.4"><rect x="0.5" y="4" width="11.6" height="3.6" fill="#4a8fd8"/><rect x="4.6" y="4.2" width="3.4" height="3.2" fill="#d6e6f7"/><path d="M0.5 0.6h11.6v10.2h-11.6z M0.5 4h11.6 M0.5 7.6h11.6 M4.4 0.6v10.2 M8.3 0.6v10.2" fill="none" stroke="#605e5c" stroke-width="0.9"/></svg>
<div class="a" style="left:0;top:0;width:1024px;height:477px;will-change:transform;">
<span class="t" style="left:12.52px;top:6px;font-size:9.7px;color:#444444;transform:scaleX(0.9261);-webkit-text-stroke:0.22px #444444;">File</span>
<span class="t" style="left:51.31px;top:6px;font-size:9.7px;color:#444444;transform:scaleX(1.0397);-webkit-text-stroke:0.22px #444444;">Home</span>
<span class="t" style="left:99.11px;top:6px;font-size:9.7px;color:#444444;transform:scaleX(1.0262);-webkit-text-stroke:0.22px #444444;">Insert</span>
<span class="t" style="left:146.31px;top:6px;font-size:9.7px;color:#444444;transform:scaleX(0.9957);-webkit-text-stroke:0.22px #444444;">Page Layout</span>
<span class="t" style="left:222.31px;top:6px;font-size:9.7px;color:#444444;transform:scaleX(0.9949);-webkit-text-stroke:0.22px #444444;">Formulas</span>
<span class="t" style="left:284.12px;top:6px;font-size:9.7px;color:#444444;transform:scaleX(0.9952);-webkit-text-stroke:0.22px #444444;">Data</span>
<span class="t" style="left:325.91px;top:6px;font-size:9.7px;color:#444444;transform:scaleX(0.9718);-webkit-text-stroke:0.22px #444444;">Review</span>
<span class="t" style="left:419.62px;top:6px;font-size:9.7px;color:#444444;transform:scaleX(1.0145);-webkit-text-stroke:0.22px #444444;">Automate</span>
<span class="t" style="left:484.01px;top:6px;font-size:9.7px;color:#444444;transform:scaleX(1.0267);-webkit-text-stroke:0.22px #444444;">Help</span>
<span class="t" style="left:376.81px;top:6px;font-size:9.7px;color:#222;transform:scaleX(1.0548);-webkit-text-stroke:0.15px #222;">View</span>
<span class="t" style="left:890.91px;top:6px;font-size:9.7px;color:#237a4b;transform:scaleX(1.0710);-webkit-text-stroke:0.3px #237a4b;">Comments</span>
<span class="t" style="left:971.51px;top:6px;font-size:9.7px;color:#237a4b;transform:scaleX(1.0197);-webkit-text-stroke:0.3px #237a4b;">Share</span>
<span class="t" style="left:71.53px;top:81px;font-size:9.4px;color:#555;transform:scaleX(0.9233);-webkit-text-stroke:0.22px #555;">Sheet View</span>
<span class="t" style="left:238.93px;top:81px;font-size:9.4px;color:#555;transform:scaleX(0.9591);-webkit-text-stroke:0.22px #555;">Workbook Views</span>
<span class="t" style="left:439.83px;top:81px;font-size:9.4px;color:#555;transform:scaleX(0.9653);-webkit-text-stroke:0.22px #555;">Show</span>
<span class="t" style="left:590.33px;top:81px;font-size:9.4px;color:#555;transform:scaleX(0.9362);-webkit-text-stroke:0.22px #555;">Zoom</span>
<span class="t" style="left:752.13px;top:81px;font-size:9.4px;color:#555;transform:scaleX(1.0149);-webkit-text-stroke:0.22px #555;">Window</span>
<span class="t" style="left:8.12px;top:34px;font-size:9.5px;color:#b0aeac;transform:scaleX(0.9582);-webkit-text-stroke:0.22px #b0aeac;">Default</span>
<span class="t" style="left:22.02px;top:58px;font-size:9.5px;color:#b5b3b1;transform:scaleX(0.9127);-webkit-text-stroke:0.22px #b5b3b1;">Keep</span>
<span class="t" style="left:64.83px;top:58px;font-size:9.5px;color:#b5b3b1;transform:scaleX(0.9436);-webkit-text-stroke:0.22px #b5b3b1;">Exit</span>
<span class="t" style="left:102.53px;top:58px;font-size:9.5px;color:#b5b3b1;transform:scaleX(0.9703);-webkit-text-stroke:0.22px #b5b3b1;">New</span>
<span class="t" style="left:143.53px;top:58px;font-size:9.5px;color:#b5b3b1;transform:scaleX(0.9847);-webkit-text-stroke:0.22px #b5b3b1;">Options</span>
<span class="t" style="left:194.53px;top:53px;font-size:9.5px;color:#333;transform:scaleX(0.9714);-webkit-text-stroke:0.22px #333;">Normal</span>
<span class="t" style="left:227.93px;top:53px;font-size:9.5px;color:#444444;transform:scaleX(0.8811);-webkit-text-stroke:0.22px #444444;">Page Break</span>
<span class="t" style="left:234.33px;top:65px;font-size:9.5px;color:#444444;transform:scaleX(0.9424);-webkit-text-stroke:0.22px #444444;">Preview</span>
<span class="t" style="left:290.02px;top:34px;font-size:9.5px;color:#444444;transform:scaleX(0.9230);-webkit-text-stroke:0.22px #444444;">Page Layout</span>
<span class="t" style="left:290.02px;top:58px;font-size:9.5px;color:#444444;transform:scaleX(0.9373);-webkit-text-stroke:0.22px #444444;">Custom Views</span>
<span class="t" style="left:364.92px;top:53px;font-size:9.5px;color:#444444;transform:scaleX(0.9746);-webkit-text-stroke:0.22px #444444;">Navigation</span>
<span class="t" style="left:426.52px;top:28px;font-size:9.5px;color:#b5b3b1;transform:scaleX(0.9052);-webkit-text-stroke:0.22px #b5b3b1;">Ruler</span>
<span class="t" style="left:426.52px;top:45px;font-size:9.5px;color:#444444;transform:scaleX(0.9213);-webkit-text-stroke:0.22px #444444;">Gridlines</span>
<span class="t" style="left:426.52px;top:62px;font-size:9.5px;color:#444444;transform:scaleX(0.9270);-webkit-text-stroke:0.22px #444444;">Formula Bar</span>
<span class="t" style="left:495.32px;top:28px;font-size:9.5px;color:#444444;transform:scaleX(0.9479);-webkit-text-stroke:0.22px #444444;">Headings</span>
<span class="t" style="left:553.42px;top:53px;font-size:9.5px;color:#444444;transform:scaleX(1.0228);-webkit-text-stroke:0.22px #444444;">Zoom</span>
<span class="t" style="left:596.33px;top:39.0px;font-size:9.4px;color:#fff;transform:scaleX(0.8010);-webkit-text-stroke:0.22px #fff;">100</span>
<span class="t" style="left:586.73px;top:53px;font-size:9.5px;color:#444444;transform:scaleX(0.8987);-webkit-text-stroke:0.22px #444444;">100%</span>
<span class="t" style="left:614.82px;top:53px;font-size:9.5px;color:#444444;transform:scaleX(1.0227);-webkit-text-stroke:0.22px #444444;">Zoom to</span>
<span class="t" style="left:614.23px;top:65px;font-size:9.5px;color:#444444;transform:scaleX(0.9400);-webkit-text-stroke:0.22px #444444;">Selection</span>
<span class="t" style="left:681.42px;top:28px;font-size:9.5px;color:#444444;transform:scaleX(0.9696);-webkit-text-stroke:0.22px #444444;">New Window</span>
<span class="t" style="left:681.42px;top:46px;font-size:9.5px;color:#444444;transform:scaleX(0.9541);-webkit-text-stroke:0.22px #444444;">Arrange All</span>
<span class="t" style="left:681.42px;top:64px;font-size:9.5px;color:#444444;transform:scaleX(0.8511);-webkit-text-stroke:0.22px #444444;">Freeze Panes</span>
<span class="t" style="left:761.52px;top:28px;font-size:9.5px;color:#444444;transform:scaleX(0.9657);-webkit-text-stroke:0.22px #444444;">Split</span>
<span class="t" style="left:761.52px;top:46px;font-size:9.5px;color:#444444;transform:scaleX(0.9746);-webkit-text-stroke:0.22px #444444;">Hide</span>
<span class="t" style="left:761.52px;top:64px;font-size:9.5px;color:#b5b3b1;transform:scaleX(0.9615);-webkit-text-stroke:0.22px #b5b3b1;">Unhide</span>
<span class="t" style="left:835.92px;top:53px;font-size:9.5px;color:#444444;transform:scaleX(0.9630);-webkit-text-stroke:0.22px #444444;">Switch</span>
<span class="t" style="left:826.62px;top:65px;font-size:9.5px;color:#444444;transform:scaleX(0.9638);-webkit-text-stroke:0.22px #444444;">Windows</span>
<span class="t" style="left:887.62px;top:53px;font-size:9.5px;color:#333;transform:scaleX(0.9517);-webkit-text-stroke:0.22px #333;">Macros</span>
<span class="t" style="left:167.20px;top:106px;font-size:10.5px;color:#444;font-family:'Liberation Serif',serif;-webkit-text-stroke:0.22px #444;"><i>f</i></span>
<span class="t" style="left:170.90px;top:109px;font-size:7px;color:#444;font-weight:700;font-family:'Liberation Serif',serif;-webkit-text-stroke:0.22px #444;"><i>x</i></span>
</div>
</body></html>
